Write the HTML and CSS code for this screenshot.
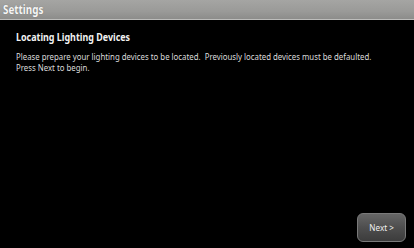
FILE: index.html
```html
<!DOCTYPE html>
<html>
<head>
<meta charset="utf-8">
<link rel="stylesheet" href="styles.css">
</head>
<body>
<div class="screen">
  <header class="titlebar"><span class="title">Settings</span></header>
  <main class="content">
    <h1 class="heading">Locating Lighting Devices</h1>
    <p class="body-text">Please prepare your lighting devices to be located.&nbsp; Previously located devices must be defaulted.<br>Press Next to begin.</p>
  </main>
  <footer class="actions"><button class="next-btn"><span class="btn-label">Next &gt;</span></button></footer>
</div>
</body>
</html>
```
FILE: styles.css
```css
html, body {
  margin: 0;
  padding: 0;
  background: #000;
}
.screen {
  width: 414px;
  height: 248px;
  display: flex;
  flex-direction: column;
  background: #000;
  font-family: "Noto Sans", "Open Sans", sans-serif;
  color: #e6e6e6;
  overflow: hidden;
}
.titlebar {
  height: 19px;
  background: linear-gradient(#a5a5a3, #9a9a98 60%, #8c8c8a);
  border-bottom: 1px solid #bdbdbb;
  display: flex;
  align-items: center;
  padding-left: 3px;
}
.title {
  display: inline-block;
  font-size: 12px;
  font-weight: bold;
  color: #f6f6f6;
  text-shadow: 0 0 1px #666;
  transform: scaleX(0.82);
  transform-origin: left center;
}
.content {
  flex: 1;
  padding: 10px 16px 0 16px;
}
.heading {
  margin: 0 0 7px 0;
  font-size: 10.5px;
  line-height: 14px;
  font-weight: bold;
  color: #f2f2f2;
  transform: scaleX(0.85);
  transform-origin: left center;
  white-space: nowrap;
}
.body-text {
  margin: 0;
  width: 420px;
  white-space: nowrap;
  font-size: 8.5px;
  line-height: 11px;
  color: #dcdcdc;
  transform: scaleX(0.92);
  transform-origin: left top;
}
.actions {
  display: flex;
  justify-content: flex-end;
  padding: 0 8px 6px 0;
}
.next-btn {
  width: 49px;
  height: 29px;
  border-radius: 6px;
  border: 1px solid #7a7a7a;
  background: linear-gradient(#666666, #4e4e4e 50%, #3c3c3c);
  color: #f0f0f0;
  font-family: "Noto Sans", "Open Sans", sans-serif;
  font-size: 9px;
  padding: 0;
}
.btn-label {
  display: inline-block;
  transform: scaleX(0.9);
}
```
